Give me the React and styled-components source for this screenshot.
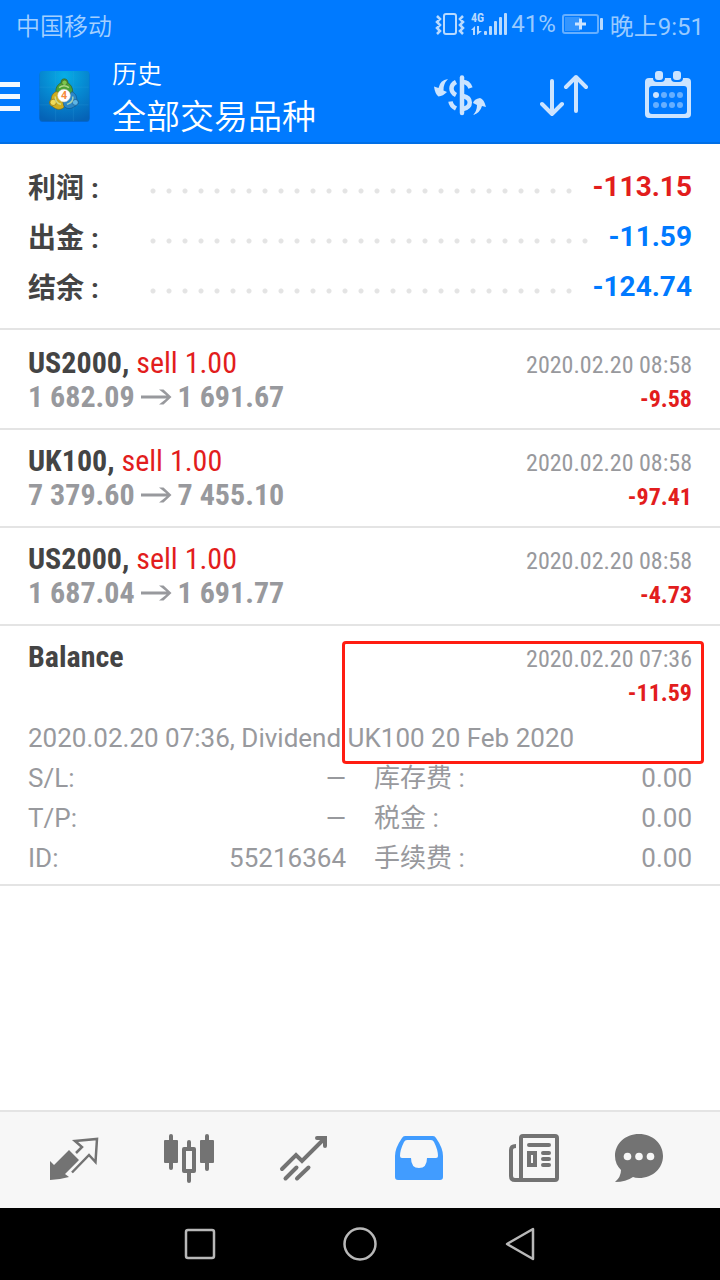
import { useState } from "react";
import styled, { createGlobalStyle } from "styled-components";

const GlobalStyle = createGlobalStyle`
  * {
    box-sizing: border-box;
    margin: 0;
    padding: 0;
  }
  body {
    background-color: #fff;
    color: #444;
    font-family: Roboto, "Noto Sans CJK SC", sans-serif;
  }
  button {
    border: 0;
    background: none;
    font: inherit;
    cursor: pointer;
  }
  svg {
    display: block;
  }
`;

const condensed = `"Roboto Condensed", "Liberation Sans Narrow", Roboto, sans-serif`;

const Page = styled.div`
  display: flex;
  flex-direction: column;
  min-height: 100vh;
`;

const HeaderStyle = styled.header`
  background-color: #007aff;
  border-bottom: 2px solid #006fe6;
  color: #fff;
`;

const StatusBar = styled.div`
  display: flex;
  justify-content: space-between;
  align-items: center;
  height: 50px;
  padding: 0 16px 2px;
  color: #a3d0ff;
  font-size: 24px;
  font-weight: 350;
`;

const StatusItems = styled.div`
  display: flex;
  align-items: center;
  gap: 6px;
  color: #99caff;
  font-weight: 400;
`;

const Signal = styled.div`
  display: flex;
  align-items: center;
  gap: 3px;
`;

const Toolbar = styled.div`
  display: flex;
  align-items: center;
  height: 92px;
`;

const MenuButton = styled.button`
  display: flex;
  flex-direction: column;
  gap: 7px;
  width: 39px;
  span {
    width: 20px;
    height: 5px;
    background-color: #f2f8ff;
  }
`;

const Titles = styled.div`
  flex: 1;
  padding-left: 22px;
`;

const Title = styled.h1`
  font-size: 25px;
  font-weight: 350;
  line-height: 42px;
`;

const Subtitle = styled.p`
  font-size: 34px;
  font-weight: 350;
  line-height: 42px;
`;

const ToolButton = styled.button`
  display: flex;
  justify-content: center;
  align-items: center;
  width: 104px;
  height: 92px;
  color: #cce4ff;
`;

const Main = styled.main`
  flex: 1;
`;

const Summary = styled.dl`
  padding: 17px 28px;
  border-bottom: 2px solid #e4e4e4;
`;

const SummaryRow = styled.div`
  display: flex;
  align-items: center;
  height: 50px;
  font-size: 28px;
  font-weight: 700;
  dt {
    width: 117px;
  }
  dd {
    color: ${({ $color }) => $color};
  }
`;

const Dots = styled.span`
  flex: 1;
  height: 6px;
  margin: 10px 12px 0 0;
  background: radial-gradient(circle, #e4e4e4 2px, transparent 3px) 0 0 / 16px 6px repeat-x;
`;

const List = styled.ul`
  padding-top: 2px;
  list-style: none;
`;

const Deal = styled.li`
  position: relative;
  padding: 14px 28px ${({ $open }) => ($open ? "6px" : "14px")};
  border-bottom: 2px solid #e4e4e4;
`;

const DealRow = styled.div`
  display: flex;
  justify-content: space-between;
  height: 34px;
  font-family: ${condensed};
  line-height: 34px;
`;

const Symbol = styled.strong`
  font-size: 30px;
  font-weight: 700;
  span {
    color: #e21d1d;
    font-weight: 400;
  }
`;

const Prices = styled.span`
  display: flex;
  align-items: center;
  gap: 6px;
  color: #98999d;
  font-size: 30px;
  font-weight: 700;
`;

const Time = styled.time`
  padding-top: 4px;
  color: #98999d;
  font-size: 24px;
  line-height: 30px;
`;

const Profit = styled.span`
  margin-left: auto;
  padding-top: 4px;
  color: #e21d1d;
  font-size: 24px;
  font-weight: 700;
  line-height: 30px;
`;

const Comment = styled.p`
  margin-top: 10px;
  color: #98999d;
  font-size: 26px;
  line-height: 40px;
`;

const Details = styled.dl`
  display: grid;
  grid-template-columns: 1fr 1fr;
  column-gap: 28px;
  color: #98999d;
  font-size: 26px;
  line-height: 40px;
  div {
    display: flex;
    justify-content: space-between;
  }
`;

const Highlight = styled.div`
  position: absolute;
  top: 15px;
  right: 16px;
  width: 362px;
  height: 123px;
  border: 3px solid #ff1d12;
  border-radius: 4px;
  pointer-events: none;
`;

const TabBar = styled.nav`
  display: flex;
  padding: 0 14px 0 16px;
  border-top: 2px solid #e4e4e4;
  background-color: #f7f7f7;
`;

const Tab = styled.button`
  flex: 1;
  height: 96px;
  color: ${({ $active }) => ($active ? "#419cff" : "#737373")};
  svg {
    margin: 0 auto;
  }
`;

const SystemBar = styled.div`
  display: flex;
  justify-content: center;
  background-color: #000;
`;

const SystemButton = styled.button`
  display: flex;
  justify-content: center;
  align-items: center;
  width: 160px;
  height: 72px;
`;

const VibrateIcon = () => (
  <svg width="30" height="24" viewBox="0 0 30 24" fill="none" stroke="#b8daff" strokeWidth="2">
    <rect x="9" y="2" width="12" height="20" rx="2" />
    <path d="M2 4l3 3-3 3 3 3-3 3 3 3-3 3M28 4l-3 3 3 3-3 3 3 3-3 3 3 3" strokeWidth="2.500" />
  </svg>
);

const SignalIcon = () => (
  <svg width="37" height="24" viewBox="0 0 37 24" fill="#b8daff">
    <text x="0" y="10" fontFamily="Roboto Condensed, Roboto, sans-serif" fontSize="12" fontWeight="700">
      4G
    </text>
    <path d="M0 18l4-4v9H2v-5zM6 14h2v5h3l-5 4z" />
    <rect x="13" y="19" width="3" height="4" rx="1" />
    <rect x="18" y="14" width="3" height="9" rx="1" />
    <rect x="23" y="9" width="3" height="14" rx="1" />
    <rect x="28" y="5" width="3" height="18" rx="1" />
    <rect x="33" y="1" width="3" height="22" rx="1" />
  </svg>
);

const BatteryIcon = () => (
  <svg width="42" height="22" viewBox="0 0 42 22">
    <rect x="1" y="2" width="35" height="18" rx="2" fill="none" stroke="#66afff" strokeWidth="2" />
    <rect x="3" y="4" width="15" height="14" fill="#3395ff" />
    <path d="M13 11h11M18.500 5.500v11" stroke="#cce4ff" strokeWidth="3" />
    <rect x="38" y="5" width="3" height="12" rx="1" fill="#b8daff" />
  </svg>
);

const AppLogo = () => (
  <svg width="51" height="51" viewBox="0 0 51 52">
    <defs>
      <radialGradient id="sky" cx="0.5" cy="0.1" r="0.95">
        <stop offset="0" stopColor="#07aee6" />
        <stop offset="0.5" stopColor="#0687d0" />
        <stop offset="1" stopColor="#0562b6" />
      </radialGradient>
    </defs>
    <rect x="0" y="1" width="51" height="51" rx="3" fill="#0359b4" opacity="0.6" />
    <rect x="0" y="0" width="51" height="51" rx="3" fill="url(#sky)" />
    <path d="M16.500 0v51M34.500 0v51M0 16.500h50M0 34.500h50" stroke="#3aa5e0" strokeWidth="1" opacity="0.2" />
    <g stroke="#35521c" strokeWidth="0.6">
      <path d="M25 8c-3 0-3 3-3 4-4 2-6 6-5 10l4 4 9-1 4-3c0-5-2-8-5-10 0-2-1-4-4-4z" fill="#4ba236" />
      <circle cx="25.500" cy="12" r="2.800" fill="#7cc74d" />
    </g>
    <g stroke="#756117" strokeWidth="0.6">
      <path d="M17 21c-4 2-5 5-5 8-3 2-2 6 1 7 4 4 9 4 12 1l1-5-5-10z" fill="#cfae20" />
      <circle cx="14" cy="32" r="3.200" fill="#f2db58" />
    </g>
    <g stroke="#124f80" strokeWidth="0.6">
      <path d="M33 21c4 2 5 5 5 8 3 3 1 6-2 7-4 3-8 3-11 0l-1-4 5-6z" fill="#2b87c8" />
      <circle cx="36.500" cy="32" r="3" fill="#5cb5e6" />
    </g>
    <path d="M20 17q5-4 10 0M16 26q0 7 6 8M34 26q1 6-6 8" fill="none" stroke="#d9efab" strokeWidth="1.500" opacity="0.7" />
    <circle cx="25" cy="25" r="6.500" fill="#fff" stroke="#c9cbbb" strokeWidth="0.500" />
    <text x="25" y="29" textAnchor="middle" fontFamily="Roboto, sans-serif" fontSize="11" fontWeight="700" fill="#f58a3c">
      4
    </text>
  </svg>
);

const CurrencyIcon = () => (
  <svg width="52" height="44" viewBox="0 0 52 44" fill="currentColor">
    <path d="M14 5Q6 6 4.500 14L0 12.500Q1 20 4.500 22.500Q9 22 13 18L9.500 16.500Q9 10 14 5Z" />
    <path d="M46 24Q50 25 52 33L48 32Q46 39 39 41Q43 37 43 31L39 29Q40 25 46 24Z" />
    <g fill="none" stroke="currentColor" strokeWidth="4.500">
      <path d="M22 8C16 11 16 18 22 21M16.500 27.500C17 31 19 33 22 34.500" />
      <path d="M28 3.500v35.500" strokeLinecap="round" />
      <path d="M29 8C33 8 35 10 36.500 14M29 22C38 24 38 33 29 35" />
    </g>
  </svg>
);

const SortIcon = () => (
  <svg width="48" height="44" viewBox="0 0 48 44" fill="none" stroke="currentColor" strokeWidth="4" strokeLinecap="round" strokeLinejoin="round">
    <path d="M12 7v33M2 30l10 10 10-10M36 37V3M26 13L36 3l10 10" />
  </svg>
);

const CalendarIcon = () => (
  <svg width="48" height="50" viewBox="0 2 48 50" fill="currentColor">
    <rect x="1" y="9" width="46" height="40" rx="4" />
    <rect x="5" y="17" width="38" height="28" rx="3" fill="#007aff" />
    <rect x="9" y="0" width="12" height="13" rx="4" fill="#007aff" />
    <rect x="27" y="0" width="12" height="13" rx="4" fill="#007aff" />
    <rect x="11" y="2" width="8" height="9" rx="3" />
    <rect x="29" y="2" width="8" height="9" rx="3" />
    <circle cx="12" cy="26" r="3" />
    <g opacity="0.5">
      <circle cx="20" cy="26" r="3" />
      <circle cx="28" cy="26" r="3" />
      <circle cx="36" cy="26" r="3" />
      <circle cx="12" cy="36" r="3" />
      <circle cx="20" cy="36" r="3" />
      <circle cx="28" cy="36" r="3" />
      <circle cx="36" cy="36" r="3" />
    </g>
  </svg>
);

const ArrowIcon = () => (
  <svg width="31" height="18" viewBox="0 0 31 18">
    <path d="M0 7.500h25.500L18 1.500h4.500L30.500 9l-8 7.500H18l7.500-6H0z" fill="#98999d" />
  </svg>
);

const TabIcon = ({ children }) => (
  <svg width="115" height="96" viewBox="0 0 115 96" fill="currentColor">
    {children}
  </svg>
);

const QuotesIcon = () => (
  <TabIcon>
    <path d="M34 49l4 4 15-15 10 10-14 14 4 3-9 2-10 1z" />
    <path d="M60 41l6-6-7-6 22-2-1.500 23-6.500-7-17 17.500" fill="none" stroke="currentColor" strokeWidth="2.500" />
  </TabIcon>
);

const ChartIcon = () => (
  <TabIcon>
    <rect x="33" y="28" width="14" height="23" rx="1" />
    <rect x="38" y="22" width="4" height="36" rx="2" />
    <rect x="53" y="37" width="10" height="22" fill="none" stroke="currentColor" strokeWidth="4" strokeLinejoin="round" />
    <path d="M58 30v6M58 60v9" stroke="currentColor" strokeWidth="4" strokeLinecap="round" />
    <rect x="69" y="28" width="14" height="23" rx="1" />
    <rect x="74" y="22" width="4" height="37" rx="2" />
  </TabIcon>
);

const TradeIcon = () => (
  <TabIcon>
    <path
      d="M36 57l14-14 6 6 22-22M71 26h8v8M39.500 66.500l11-11M51 66.500l11.500-11"
      fill="none"
      stroke="currentColor"
      strokeWidth="4"
      strokeLinecap="round"
    />
  </TabIcon>
);

const HistoryIcon = () => (
  <TabIcon>
    <path
      fillRule="evenodd"
      d="M44 24h28q2 0 3 2q7 10 7 18v21q0 3-3 3H37q-3 0-3-3V44q0-8 7-18q1-2 3-2zM46 28q-2 0-3 2q-4 8-4 14q0 2 2 2h9q0 10 8 10t8-10h9q2 0 2-2q0-6-4-14q-1-2-3-2z"
    />
  </TabIcon>
);

const NewsIcon = () => (
  <TabIcon>
    <g fill="none" stroke="currentColor" strokeWidth="4">
      <rect x="45" y="24" width="36" height="44" rx="2" />
      <path d="M40 34q-5 0-5 4v26q0 4 4 4h8" />
      <rect x="53" y="41" width="6" height="12" />
      <path d="M53 33h20M67 41h6M67 47h6M67 53h6" strokeLinecap="round" />
    </g>
  </TabIcon>
);

const ChatIcon = () => (
  <TabIcon>
    <path d="M48 22c14 0 24 10 24 22s-10 22-24 22q-4 0-6-1q-7 5-18 5q6-5 6-12q-6-6-6-14c0-12 10-22 24-22z" />
    <g fill="#f7f7f7">
      <circle cx="36.500" cy="44.500" r="3.800" />
      <circle cx="48" cy="44.500" r="3.800" />
      <circle cx="59.500" cy="44.500" r="3.800" />
    </g>
  </TabIcon>
);

const summary = [
  { label: "利润 :", value: "-113.15", color: "#e21d1d" },
  { label: "出金 :", value: "-11.59", color: "#007aff" },
  { label: "结余 :", value: "-124.74", color: "#007aff" },
];

const deals = [
  { symbol: "US2000", from: "1 682.09", to: "1 691.67", profit: "-9.58" },
  { symbol: "UK100", from: "7 379.60", to: "7 455.10", profit: "-97.41" },
  { symbol: "US2000", from: "1 687.04", to: "1 691.77", profit: "-4.73" },
];

const details = [
  ["S/L:", "—"],
  ["库存费 :", "0.00"],
  ["T/P:", "—"],
  ["税金 :", "0.00"],
  ["ID:", "55216364"],
  ["手续费 :", "0.00"],
];

const tabs = [
  { name: "行情", Icon: QuotesIcon },
  { name: "图表", Icon: ChartIcon },
  { name: "交易", Icon: TradeIcon },
  { name: "历史", Icon: HistoryIcon },
  { name: "新闻", Icon: NewsIcon },
  { name: "消息", Icon: ChatIcon },
];

const Header = () => (
  <HeaderStyle>
    <StatusBar>
      <span>中国移动</span>
      <StatusItems>
        <VibrateIcon />
        <Signal>
          <SignalIcon />
          <span>41%</span>
        </Signal>
        <BatteryIcon />
        <span>晚上9:51</span>
      </StatusItems>
    </StatusBar>
    <Toolbar>
      <MenuButton aria-label="菜单">
        <span />
        <span />
        <span />
      </MenuButton>
      <AppLogo />
      <Titles>
        <Title>历史</Title>
        <Subtitle>全部交易品种</Subtitle>
      </Titles>
      <ToolButton aria-label="交易品种">
        <CurrencyIcon />
      </ToolButton>
      <ToolButton aria-label="排序">
        <SortIcon />
      </ToolButton>
      <ToolButton aria-label="日期">
        <CalendarIcon />
      </ToolButton>
    </Toolbar>
  </HeaderStyle>
);

const App = () => {
  const [active, setActive] = useState("历史");

  return (
    <Page>
      <GlobalStyle />
      <Header />
      <Main>
        <Summary>
          {summary.map(row => (
            <SummaryRow key={row.label} $color={row.color}>
              <dt>{row.label}</dt>
              <Dots />
              <dd>{row.value}</dd>
            </SummaryRow>
          ))}
        </Summary>
        <List>
          {deals.map(deal => (
            <Deal key={deal.profit}>
              <DealRow>
                <Symbol>
                  {deal.symbol}, <span>sell 1.00</span>
                </Symbol>
                <Time>2020.02.20 08:58</Time>
              </DealRow>
              <DealRow>
                <Prices>
                  {deal.from}
                  <ArrowIcon />
                  {deal.to}
                </Prices>
                <Profit>{deal.profit}</Profit>
              </DealRow>
            </Deal>
          ))}
          <Deal $open>
            <DealRow>
              <Symbol>Balance</Symbol>
              <Time>2020.02.20 07:36</Time>
            </DealRow>
            <DealRow>
              <Profit>-11.59</Profit>
            </DealRow>
            <Comment>2020.02.20 07:36, Dividend UK100 20 Feb 2020</Comment>
            <Details>
              {details.map(([label, value]) => (
                <div key={label}>
                  <dt>{label}</dt>
                  <dd>{value}</dd>
                </div>
              ))}
            </Details>
            <Highlight />
          </Deal>
        </List>
      </Main>
      <TabBar>
        {tabs.map(({ name, Icon }) => (
          <Tab key={name} aria-label={name} $active={name === active} onClick={() => setActive(name)}>
            <Icon />
          </Tab>
        ))}
      </TabBar>
      <SystemBar>
        <SystemButton aria-label="最近任务">
          <svg width="32" height="32" viewBox="0 0 32 32" fill="none" stroke="#b8b8b8" strokeWidth="2.500">
            <rect x="2" y="2" width="28" height="28" rx="2" />
          </svg>
        </SystemButton>
        <SystemButton aria-label="主屏幕">
          <svg width="34" height="34" viewBox="0 0 34 34" fill="none" stroke="#b8b8b8" strokeWidth="2.500">
            <circle cx="17" cy="17" r="15.500" />
          </svg>
        </SystemButton>
        <SystemButton aria-label="返回">
          <svg width="30" height="34" viewBox="0 0 30 34" fill="none" stroke="#b8b8b8" strokeWidth="2.500" strokeLinejoin="round">
            <path d="M28 2v30L2 17z" />
          </svg>
        </SystemButton>
      </SystemBar>
    </Page>
  );
};

export default App;
